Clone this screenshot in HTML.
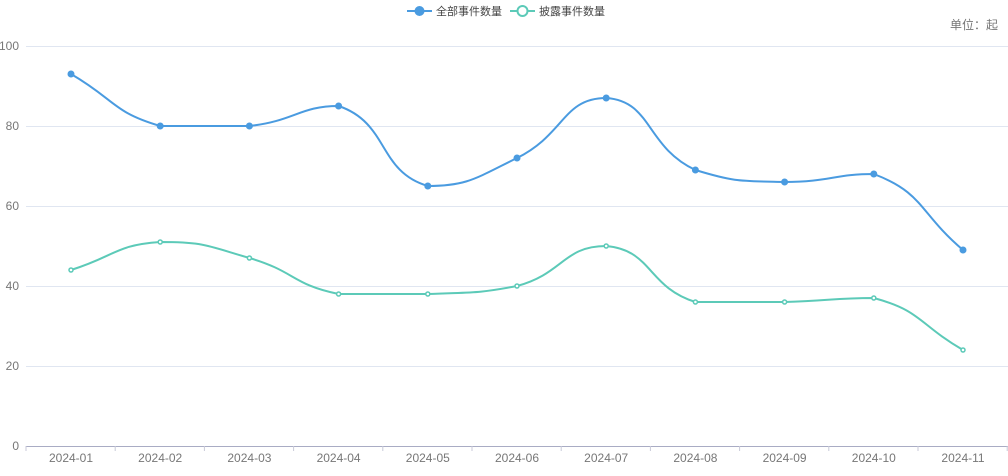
<!DOCTYPE html><html><head><meta charset="utf-8"><style>
body{margin:0;width:1008px;height:471px;background:#fff;overflow:hidden;font-family:"Liberation Sans","Noto Sans CJK SC",sans-serif}
svg text{font-family:"Liberation Sans","Noto Sans CJK SC",sans-serif}
</style></head><body>
<svg id="s" width="1008" height="471" xmlns="http://www.w3.org/2000/svg">
<g stroke="#e0e6f1" stroke-width="1">
<line x1="26" x2="1008" y1="46.5" y2="46.5"/><line x1="26" x2="1008" y1="126.5" y2="126.5"/>
<line x1="26" x2="1008" y1="206.5" y2="206.5"/><line x1="26" x2="1008" y1="286.5" y2="286.5"/>
<line x1="26" x2="1008" y1="366.5" y2="366.5"/>
</g>
<line x1="26" x2="1008" y1="446.5" y2="446.5" stroke="#a9acc4"/>
<g fill="#777" font-size="12" text-anchor="end">
<text x="19" y="50">100</text><text x="19" y="130">80</text><text x="19" y="210">60</text>
<text x="19" y="290">40</text><text x="19" y="370">20</text><text x="19" y="450">0</text>
</g>
<text x="998" y="29" fill="#777" font-size="12" text-anchor="end">单位：起</text>
<g id="ax"></g>
<g font-size="11" fill="#444">
<line x1="407" x2="432" y1="11" y2="11" stroke="#4a9be0" stroke-width="2"/><circle cx="419.5" cy="11" r="5" fill="#4a9be0"/>
<text x="436" y="15">全部事件数量</text>
<line x1="510" x2="535" y1="11" y2="11" stroke="#5ccab8" stroke-width="2"/><circle cx="522.5" cy="11" r="5" fill="#fff" stroke="#5ccab8" stroke-width="2"/>
<text x="539" y="15">披露事件数量</text>
</g>
<g id="g"></g>
</svg>
<script>
var NS="http://www.w3.org/2000/svg",s=document.getElementById('s'),ax=document.getElementById('ax'),g=document.getElementById('g');
function el(t,a,p){var e=document.createElementNS(NS,t);for(var k in a)e.setAttribute(k,a[k]);(p||g).appendChild(e);return e}
var X=function(i){return 71+89.2*i},Y=function(v){return 446-4*v};
for(var i=0;i<=11;i++){el('line',{x1:26+89.2*i,x2:26+89.2*i,y1:446,y2:451,stroke:'#c8cad8'},ax);}
for(var i=0;i<11;i++){var t=el('text',{x:X(i),y:462,'text-anchor':'middle',fill:'#777','font-size':12},ax);t.textContent='2024-'+(i<9?'0':'')+(i+1);}
function path(vals){var p=vals.map(function(v,i){return[X(i),Y(v)]}),n=p.length,cps=[];
for(var i=0;i<n;i++){var pr=p[Math.max(i-1,0)],nx=p[Math.min(i+1,n-1)],c=p[i];
var dx=nx[0]-pr[0],dy=nx[1]-pr[1];var d0=Math.hypot(c[0]-pr[0],c[1]-pr[1]),d1=Math.hypot(nx[0]-c[0],nx[1]-c[1]);var sum=d0+d1||1;
var a=[c[0]-dx*0.5*d0/sum,c[1]-dy*0.5*d0/sum],b=[c[0]+dx*0.5*d1/sum,c[1]+dy*0.5*d1/sum];
a[1]=Math.min(Math.max(a[1],Math.min(pr[1],c[1])),Math.max(pr[1],c[1]));b[1]=Math.min(Math.max(b[1],Math.min(nx[1],c[1])),Math.max(nx[1],c[1]));
cps.push([a,b]);}
var d='M'+p[0];for(var i=1;i<n;i++)d+=' C'+cps[i-1][1]+' '+cps[i][0]+' '+p[i];return[d,p]}
function series(vals,col,hollow){var r=path(vals);el('path',{d:r[0],fill:'none',stroke:col,'stroke-width':2});
r[1].forEach(function(q){el('circle',hollow?{cx:q[0],cy:q[1],r:2,fill:'#fff',stroke:col,'stroke-width':1.5}:{cx:q[0],cy:q[1],r:3.5,fill:col})})}
series([93,80,80,85,65,72,87,69,66,68,49],'#4a9be0',false);
series([44,51,47,38,38,40,50,36,36,37,24],'#5ccab8',true);
</script>
</body></html>
